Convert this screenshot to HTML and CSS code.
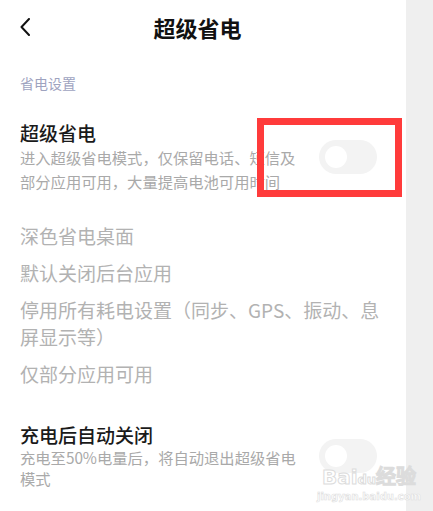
FILE: index.html
```html
<!DOCTYPE html>
<html lang="zh-CN">
<head>
  <meta charset="UTF-8">
  <meta name="viewport" content="width=device-width, initial-scale=1.0">
  <title>超级省电</title>
  <link rel="stylesheet" href="styles.css">
</head>
<body>
  <div class="screen">
    <div class="header">
      <svg class="back" width="10" height="18" viewBox="0 0 10 18">
        <path d="M9 1 L1.5 9 L9 17" fill="none" stroke="#111" stroke-width="2" stroke-linecap="round" stroke-linejoin="round"/>
      </svg>
      <div class="title">超级省电</div>
    </div>

    <div class="section-label">省电设置</div>

    <div class="row">
      <div class="row-text">
        <div class="row-title">超级省电</div>
        <div class="row-desc">进入超级省电模式，仅保留电话、短信及部分应用可用，大量提高电池可用时间</div>
      </div>
      <div class="switch"><div class="knob"></div></div>
    </div>

    <div class="items">
      <div class="item">深色省电桌面</div>
      <div class="item">默认关闭后台应用</div>
      <div class="item">停用所有耗电设置（同步、GPS、振动、息屏显示等）</div>
      <div class="item">仅部分应用可用</div>
    </div>

    <div class="row row-last">
      <div class="row-text">
        <div class="row-title">充电后自动关闭</div>
        <div class="row-desc small-lh">充电至50%电量后，将自动退出超级省电模式</div>
      </div>
      <div class="switch"><div class="knob"></div></div>
    </div>

    <!-- annotation box drawn over the screenshot -->
    <div class="mark"></div>

    <div class="watermark">
      <div class="wm-logo">Bai<span class="wm-du">du</span>经验</div>
      <div class="wm-url">jingyan.baidu.com</div>
    </div>
  </div>
  <div class="side"></div>
</body>
</html>
```

FILE: styles.css
```css
body {
  margin: 0;
  display: flex;
  height: 511px;
  overflow: hidden;
  font-family: "Noto Sans CJK SC", "Noto Sans", sans-serif;
  background: #fff;
}
.screen {
  position: relative;
  width: 406px;
  background: #fff;
}
.side {
  flex: 1;
  background: #efefef;
}
.header {
  display: flex;
  align-items: center;
  height: 54px;
  padding: 0 41px 0 20px;
}
.back {
  display: block;
}
.title {
  flex: 1;
  text-align: center;
  font-size: 22px;
  font-weight: bold;
  color: #111;
}
.section-label {
  margin-top: 19px;
  padding-left: 20px;
  font-size: 14px;
  line-height: 20px;
  color: #9ea3bf;
}
.row {
  display: flex;
  align-items: center;
  justify-content: space-between;
  margin-top: 27px;
  padding: 0 29px 0 20px;
}
.row-text {
  width: 285px;
}
.row-title {
  font-size: 19px;
  font-weight: 500;
  line-height: 25px;
  color: #1a1a1a;
}
.row-desc {
  font-size: 15.3px;
  line-height: 24px;
  color: #a9a9a9;
}
.row-desc.small-lh {
  line-height: 21px;
}
.switch {
  position: relative;
  width: 58px;
  height: 34px;
  border-radius: 17px;
  background: #f3f3f3;
}
.knob {
  position: absolute;
  left: 6px;
  top: 6px;
  width: 22px;
  height: 22px;
  border-radius: 50%;
  background: #fff;
}
.items {
  margin-top: 24px;
  padding: 0 8px 0 20px;
}
.item {
  padding: 5px 0;
  font-size: 19px;
  line-height: 27px;
  color: #b2b2b2;
}
.row-last {
  margin-top: 30px;
}
.mark {
  position: absolute;
  left: 257px;
  top: 118px;
  width: 131px;
  height: 65px;
  border: 7px solid #ff3b3b;
}
.watermark {
  position: absolute;
  left: 317px;
  top: 466px;
  color: #fff;
  text-align: center;
}
.wm-logo {
  font-family: "DejaVu Sans", sans-serif;
  font-size: 20px;
  font-weight: bold;
  line-height: 22px;
  -webkit-text-stroke: 1px #dcdcdc;
}
.wm-du {
  font-size: 13px;
}
.wm-url {
  font-family: "DejaVu Sans", sans-serif;
  font-size: 10px;
  font-weight: bold;
  -webkit-text-stroke: 0.6px #dedede;
}
```
